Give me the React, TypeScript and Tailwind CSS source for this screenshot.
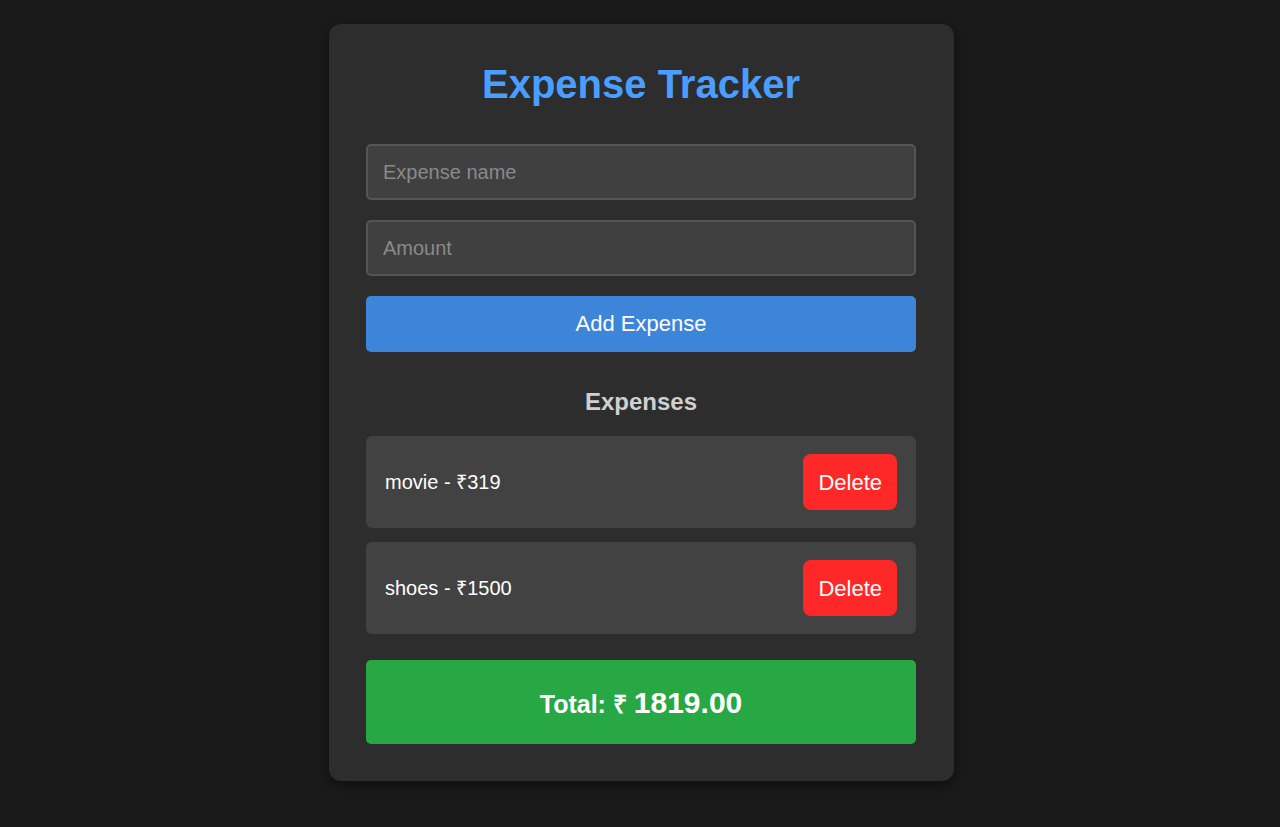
import { FC, useState } from "react";

type Expense = {
  name: string;
  amount: number;
};

const initial: Expense[] = [
  { name: "movie", amount: 319 },
  { name: "shoes", amount: 1500 },
];

const App: FC = () => {
  const [expenses, setExpenses] = useState<Expense[]>(initial);
  const [name, setName] = useState("");
  const [amount, setAmount] = useState("");

  const total = expenses.reduce((sum, e) => sum + e.amount, 0);

  const addExpense = () => {
    const value = parseFloat(amount);
    if (!name.trim() || isNaN(value)) return;
    setExpenses([...expenses, { name: name.trim(), amount: value }]);
    setName("");
    setAmount("");
  };

  return (
    <div className="min-h-screen bg-[#1a1a1a] font-['Liberation_Sans',Arial,sans-serif]">
      <div className="flex justify-center pt-[24px] pl-[2px]">
        <div className="w-[625px] rounded-[12px] bg-[#2d2d2d] px-[37.5px] pt-[37px] pb-[37px] shadow-[0_4px_12px_rgba(0,0,0,0.45)]">
          <h1 className="mb-[37px] text-center text-[40px] leading-[46px] font-bold text-[#4a9eff]">
            Expense Tracker
          </h1>

          <div className="flex flex-col gap-[20px]">
            <input
              type="text"
              placeholder="Expense name"
              value={name}
              onChange={(e) => setName(e.target.value)}
              className="h-[56px] w-full rounded-[5px] border-2 border-[#555555] bg-[#404040] px-[15px] text-[20px] text-white outline-none placeholder:text-[#8a8a8a]"
            />
            <input
              type="number"
              placeholder="Amount"
              value={amount}
              onChange={(e) => setAmount(e.target.value)}
              className="h-[56px] w-full rounded-[5px] border-2 border-[#555555] bg-[#404040] px-[15px] text-[20px] text-white outline-none placeholder:text-[#8a8a8a]"
            />
            <button
              onClick={addExpense}
              className="h-[56px] w-full rounded-[5px] bg-[#3d85d8] pb-[2px] text-[22px] text-white"
            >
              Add Expense
            </button>
          </div>

          <h3 className="mt-[36px] mb-[20px] text-center text-[24px] leading-[28px] font-bold text-[#d0d0d0]">
            Expenses
          </h3>

          <ul className="flex flex-col gap-[14px]">
            {expenses.map((e, i) => (
              <li
                key={i}
                className="flex items-center justify-between rounded-[6px] bg-[#424242] px-[19px] py-[18px]"
              >
                <span className="text-[20px] text-white">
                  {e.name} - ₹{e.amount}
                </span>
                <button
                  onClick={() => setExpenses(expenses.filter((_, j) => j !== i))}
                  className="h-[56px] rounded-[8px] bg-[#ff2828] px-[15px] text-[22px] text-white"
                >
                  Delete
                </button>
              </li>
            ))}
          </ul>

          <div className="mt-[26px] flex h-[84px] items-center justify-center rounded-[5px] bg-[#28a745] font-bold text-white">
            <p className="flex items-baseline">
              <span className="text-[25px]">Total: ₹&nbsp;</span>
              <span className="text-[30px]">{total.toFixed(2)}</span>
            </p>
          </div>
        </div>
      </div>
    </div>
  );
};

export default App;
